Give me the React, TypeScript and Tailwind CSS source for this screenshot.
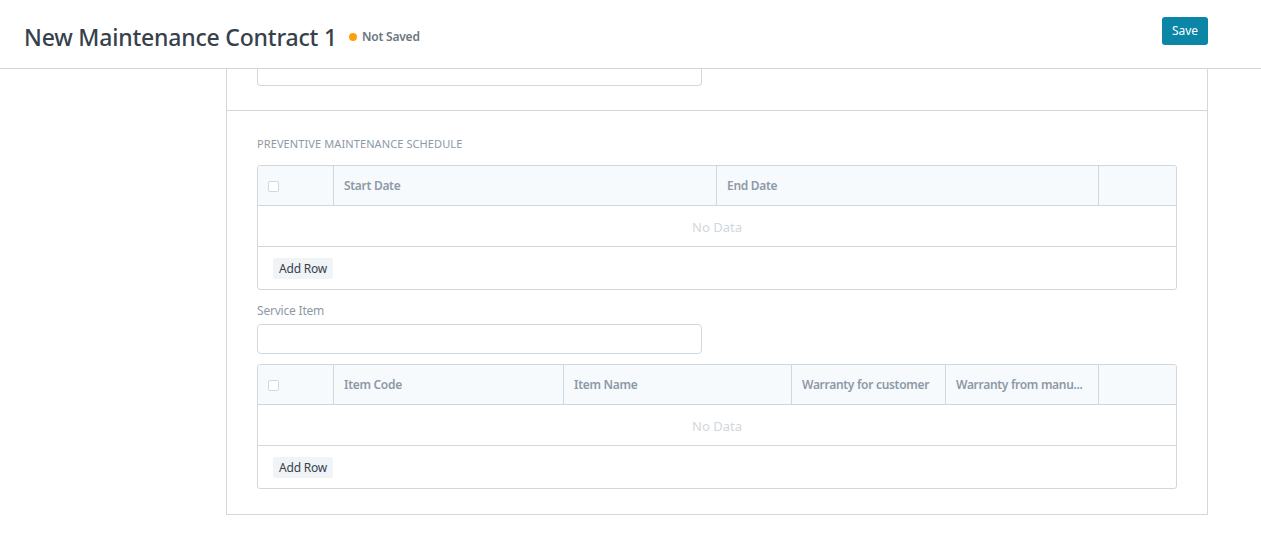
import { clsx } from 'clsx';

interface Column {
    label: string;
    width: string;
}

const scheduleColumns: Column[] = [
    { label: 'Start Date', width: 'w-[383px]' },
    { label: 'End Date', width: 'w-[382px]' },
];

const itemColumns: Column[] = [
    { label: 'Item Code', width: 'w-[230px]' },
    { label: 'Item Name', width: 'w-[228px]' },
    { label: 'Warranty for customer', width: 'w-[154px]' },
    { label: 'Warranty from manu...', width: 'w-[153px]' },
];

function Checkbox() {
    return <span className="block w-[11px] h-[11px] border border-[#d1d8dd] rounded-[2px] bg-white" />;
}

function GridTable({ columns }: { columns: Column[] }) {
    return (
        <div className="w-[920px] border border-[#d1d8dd] rounded-[3px] overflow-hidden">
            {/* Header */}
            <div className="flex h-[40px] bg-[#f7fafc] border-b border-[#d1d8dd]">
                <div className="w-[76px] flex items-center pl-[10px] pt-[2px] border-r border-[#d1d8dd]">
                    <Checkbox />
                </div>
                {columns.map((col) => (
                    <div
                        key={col.label}
                        className={clsx(
                            col.width,
                            'flex items-center px-[10px] border-r border-[#d1d8dd] text-[12px] font-semibold tracking-[-0.3px] text-[#8d99a6] min-w-0'
                        )}
                    >
                        <span className="whitespace-nowrap">{col.label}</span>
                    </div>
                ))}
                <div className="flex-1" />
            </div>

            {/* Empty row */}
            <div className="h-[41px] flex items-center justify-center pt-[3px] border-b border-[#d1d8dd] text-[13px] text-[#d1d8dd]">
                No Data
            </div>

            {/* Footer */}
            <div className="h-[42px] flex items-center px-[15px] pt-[1px]">
                <button className="h-[21px] px-[6px] rounded-[3px] bg-[#f0f4f7] text-[12px] tracking-[-0.2px] text-[#36414c] leading-none">
                    Add Row
                </button>
            </div>
        </div>
    );
}

export default function App() {
    return (
        <div className="min-h-screen bg-white text-[#36414c]" style={{ fontFamily: '"Noto Sans", "Open Sans", sans-serif' }}>
            {/* Page header */}
            <div className="h-[69px] border-b border-[#d1d8dd] flex items-start">
                <div className="flex items-center gap-[12px] pl-[24px] pt-[21px]">
                    <h1 className="text-[23px] leading-[32px] font-medium tracking-[-0.2px] text-[#36414c]">
                        New Maintenance Contract 1
                    </h1>
                    <span className="flex items-center gap-[5px] text-[12px] font-semibold tracking-[-0.2px] text-[#6c7680]">
                        <span className="w-[8px] h-[8px] rounded-full bg-[#ff9f0a]" />
                        Not Saved
                    </span>
                </div>
                <button className="ml-auto mr-[53px] mt-[17px] h-[28px] w-[46px] rounded-[3px] bg-[#0b86a6] text-white text-[12px]">
                    Save
                </button>
            </div>

            {/* Form panel */}
            <div className="ml-[226px] w-[982px] border-x border-b border-[#d1d8dd]">
                {/* Previous section, scrolled */}
                <div className="h-[42px] border-b border-[#d1d8dd] pl-[30px]">
                    <div className="w-[445px] h-[17px] border-x border-b border-[#d1d8dd] rounded-b-[4px]" />
                </div>

                {/* Preventive maintenance section */}
                <div className="pl-[30px] pt-[25px] pb-[25px]">
                    <div className="text-[11px] leading-[16px] uppercase text-[#8d99a6] tracking-[0.1px]">
                        Preventive Maintenance Schedule
                    </div>
                    <div className="mt-[13px]">
                        <GridTable columns={scheduleColumns} />
                    </div>

                    <div className="mt-[13px] text-[12px] leading-[16px] tracking-[-0.2px] text-[#8d99a6]">Service Item</div>
                    <div className="mt-[5px] w-[445px] h-[30px] border border-[#d1d8dd] rounded-[4px]" />

                    <div className="mt-[10px]">
                        <GridTable columns={itemColumns} />
                    </div>
                </div>
            </div>
        </div>
    );
}
